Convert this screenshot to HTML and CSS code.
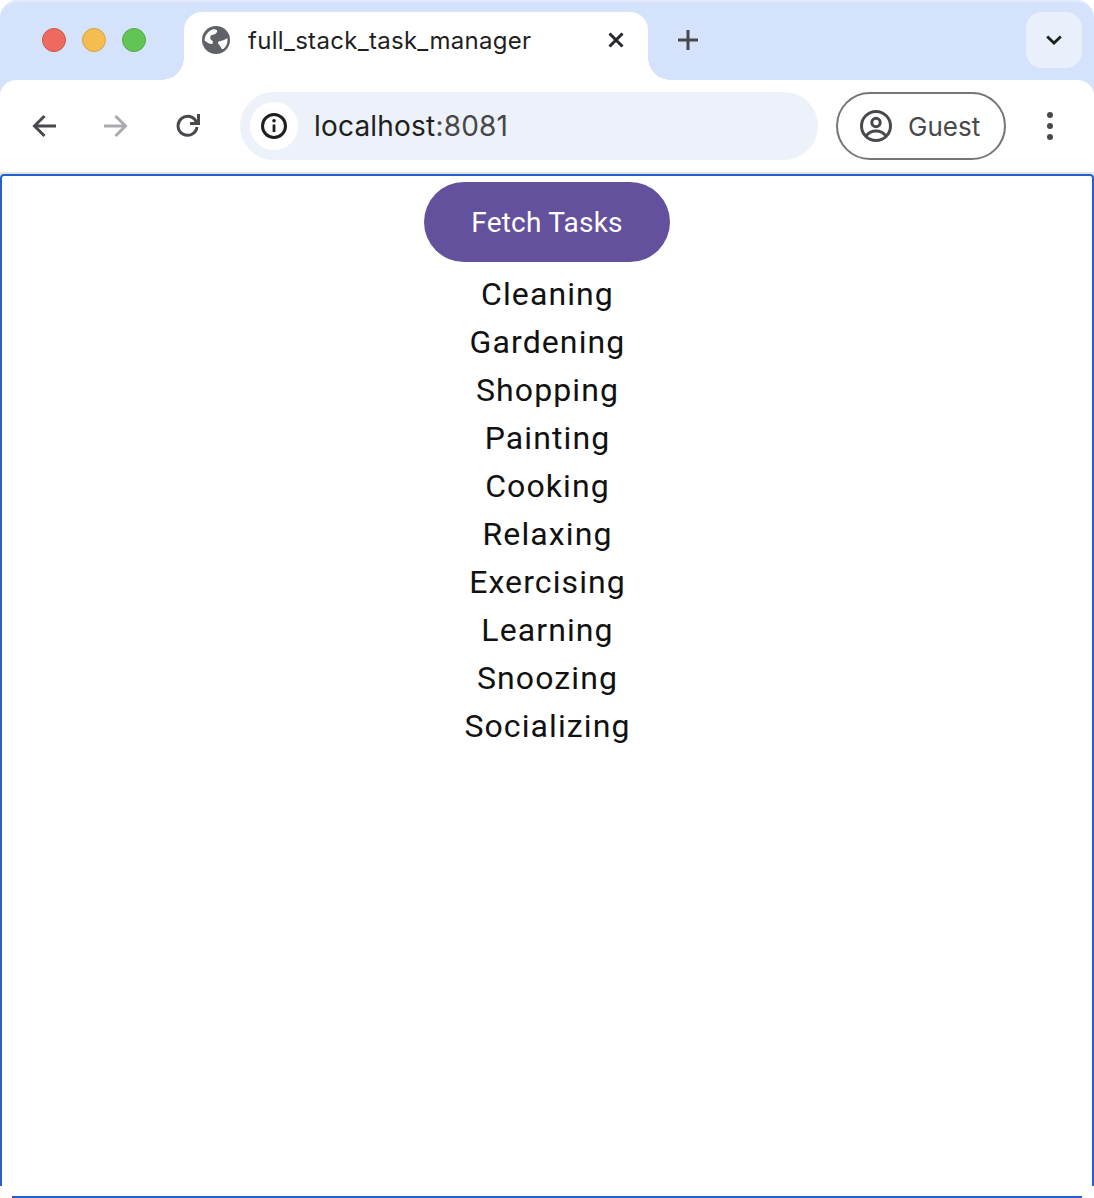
FILE: index.html
```html
<!DOCTYPE html>
<html lang="en">

<head>
  <meta charset="UTF-8" />
  <meta name="viewport" content="width=device-width, initial-scale=1.0" />
  <title>full_stack_task_manager</title>
  <link rel="stylesheet" href="styles.css">
</head>

<body>

  <div class="chrome">
    <header class="tabstrip">
      <div class="lights">
        <span class="light red"></span>
        <span class="light yellow"></span>
        <span class="light green"></span>
      </div>

      <div class="tab">
        <svg class="globe" viewBox="0 0 24 24">
          <circle cx="12" cy="12" r="12" fill="#5f6368"/>
          <path fill="#fff" d="M2.200 12.500C2.400 8 5 4.500 9 3c1.500-.4 3 0 4 .8 0 1.700-1 3-3 3.400-2 .3-3 1.300-3 2.800 0 1.500 1.300 2 2.300 3L9 15.500c-3 0-5-1.500-6.800-3z"/>
          <path fill="#fff" d="M21.800 10.500c.4 3.500-.8 7-3.300 9-1 .8-2 0-2.500-1.500-.5-1.500-1.500-2-2.200-3-.3-1.500.7-2 2.200-2.200 2-.3 4-1.300 5.800-2.300z"/>
        </svg>
        <span class="tab-title">full_stack_task_manager</span>
        <svg class="tab-close" viewBox="0 0 16 16"><path d="M1.500 1.500l13 13M14.500 1.500l-13 13" stroke="#26282b" stroke-width="3" fill="none"/></svg>
      </div>

      <svg class="new-tab" viewBox="0 0 20 20"><path d="M10 0v20M0 10h20" stroke="#47494c" stroke-width="3" fill="none"/></svg>

      <div class="tab-search">
        <svg viewBox="0 0 16 10" width="16" height="10"><path d="M1.200 1.500L8 8l6.800-6.500" stroke="#1f1f1f" stroke-width="2.800" fill="none"/></svg>
      </div>
    </header>

    <nav class="toolbar">
      <svg class="nav-icon" viewBox="0 0 24 24"><path d="M24 12H2.500M12.500 2L2.500 12l10 10" stroke="#47494c" stroke-width="3" fill="none"/></svg>
      <svg class="nav-icon" viewBox="0 0 24 24"><path d="M0 12h21.500M11.500 2l10 10-10 10" stroke="#a9abae" stroke-width="3" fill="none"/></svg>
      <svg class="nav-icon" viewBox="0 0 24 24"><path d="M20.500 8.500A9.500 9.500 0 1 0 21 13" stroke="#47494c" stroke-width="3" fill="none"/><path d="M22.500 0v9.500H14" stroke="#47494c" stroke-width="3" fill="none"/></svg>

      <div class="omnibox">
        <span class="site-info">
          <svg viewBox="0 0 26 26" width="26" height="26"><circle cx="13" cy="13" r="11.500" stroke="#1f1f1f" stroke-width="3" fill="none"/><path d="M13 11.500v7.500" stroke="#1f1f1f" stroke-width="2.800"/><circle cx="13" cy="7.800" r="1.800" fill="#1f1f1f"/></svg>
        </span>
        <span class="url">localhost<span class="port">:8081</span></span>
      </div>

      <div class="profile">
        <svg viewBox="0 0 32 32" width="32" height="32"><circle cx="16" cy="16" r="14.500" stroke="#47494c" stroke-width="3" fill="none"/><circle cx="16" cy="12.500" r="4.200" stroke="#47494c" stroke-width="3" fill="none"/><path d="M6 26c2.500-3.500 6-5 10-5s7.500 1.500 10 5" stroke="#47494c" stroke-width="3" fill="none"/></svg>
        <span>Guest</span>
      </div>

      <div class="menu-dots">
        <span></span>
        <span></span>
        <span></span>
      </div>
    </nav>
  </div>

  <main class="page">
    <button class="fetch-btn">Fetch Tasks</button>
    <ul class="task-list" id="task-list"></ul>
  </main>

  <script>
    const tasks = ['Cleaning', 'Gardening', 'Shopping', 'Painting', 'Cooking', 'Relaxing', 'Exercising', 'Learning', 'Snoozing', 'Socializing'];

    const list = document.getElementById('task-list');
    tasks.forEach(task => {
      const item = document.createElement('li');
      item.textContent = task;
      list.appendChild(item);
    });
  </script>
</body>

</html>
```

FILE: styles.css
```css
* {
  box-sizing: border-box;
  margin: 0;
  padding: 0;
}

html,
body {
  height: 100%;
  overflow: hidden;
}

body {
  display: flex;
  flex-direction: column;
  font-family: Roboto, sans-serif;
  background: #fff;
  color: #1f1f1f;
}

.chrome {
  flex-shrink: 0;
  background: #d5e2fb;
  border-radius: 18px 18px 0 0;
}

/* tab strip */
.tabstrip {
  display: flex;
  align-items: flex-start;
  height: 80px;
  padding-top: 10px;
  border-top: 2px solid #e3ebfb;
  border-radius: 18px 18px 0 0;
}

.lights {
  display: flex;
  gap: 16px;
  width: 184px;
  padding: 16px 0 0 42px;
}

.light {
  width: 24px;
  height: 24px;
  border-radius: 50%;
  border: 1px solid;
}

.red {
  background: #ee6a5f;
  border-color: #ce5347;
}

.yellow {
  background: #f5bd4f;
  border-color: #d6a243;
}

.green {
  background: #61c454;
  border-color: #58a942;
}

.tab {
  position: relative;
  display: flex;
  align-items: center;
  width: 464px;
  height: 68px;
  padding: 0 24px 12px 18px;
  background: #fff;
  border-radius: 18px 18px 0 0;
}

.tab::before,
.tab::after {
  content: "";
  position: absolute;
  bottom: 0;
  width: 22px;
  height: 22px;
}

.tab::before {
  left: -22px;
  background: radial-gradient(circle at 0 0, #d5e2fb 21.500px, #fff 22px);
}

.tab::after {
  right: -22px;
  background: radial-gradient(circle at 100% 0, #d5e2fb 21.500px, #fff 22px);
}

.globe {
  width: 28px;
  height: 28px;
  flex-shrink: 0;
}

.tab-title {
  flex: 1;
  margin-left: 18px;
  font-family: Inter, sans-serif;
  font-size: 24px;
  letter-spacing: 0.3px;
  color: #1f1f1f;
}

.tab-close {
  width: 16px;
  height: 16px;
}

.new-tab {
  width: 20px;
  height: 20px;
  margin: 18px 0 0 30px;
}

.tab-search {
  display: flex;
  align-items: center;
  justify-content: center;
  width: 56px;
  height: 56px;
  margin: 0 12px 0 auto;
  background: #e9f0fc;
  border-radius: 16px;
}

/* toolbar */
.toolbar {
  display: flex;
  align-items: center;
  height: 94px;
  padding-left: 32px;
  background: #fff;
  border-radius: 16px 16px 0 0;
  border-bottom: 2px solid #e1e3e6;
}

.nav-icon {
  width: 24px;
  height: 24px;
  margin-right: 48px;
}

.omnibox {
  display: flex;
  align-items: center;
  width: 578px;
  height: 68px;
  margin-left: -8px;
  padding-left: 10px;
  background: #ecf1fa;
  border-radius: 34px;
}

.site-info {
  display: flex;
  align-items: center;
  justify-content: center;
  width: 48px;
  height: 48px;
  background: #fff;
  border-radius: 50%;
}

.url {
  margin-left: 16px;
  font-family: Inter, sans-serif;
  font-size: 28px;
  letter-spacing: 0.2px;
  color: #1f1f1f;
}

.port {
  color: #474747;
}

.profile {
  display: flex;
  align-items: center;
  gap: 16px;
  width: 170px;
  height: 68px;
  margin-left: 18px;
  padding-left: 22px;
  border: 2px solid #747678;
  border-radius: 34px;
  font-family: Inter, sans-serif;
  font-size: 26px;
  color: #47494c;
}

.menu-dots {
  display: flex;
  flex-direction: column;
  gap: 5px;
  margin-left: 41px;
}

.menu-dots span {
  width: 6px;
  height: 6px;
  border-radius: 50%;
  background: #47494c;
}

/* page */
.page {
  position: relative;
  flex: 1;
  display: flex;
  flex-direction: column;
  align-items: center;
  padding-top: 6px;
  border: 2px solid #2560c8;
  border-radius: 4px 4px 0 0;
}

.page::before,
.page::after {
  content: "";
  position: absolute;
  bottom: -2px;
  width: 12px;
  height: 12px;
  background: #fff;
}

.page::before {
  left: -2px;
}

.page::after {
  right: -2px;
}

.fetch-btn {
  width: 246px;
  height: 80px;
  margin-bottom: 8px;
  background: #63519d;
  color: #fff;
  border: none;
  border-radius: 40px;
  font-family: Roboto, sans-serif;
  font-size: 28px;
  font-weight: 400;
  letter-spacing: 0.2px;
}

.task-list {
  list-style: none;
  text-align: center;
  padding-left: 1px;
}

.task-list li {
  font-size: 32px;
  line-height: 48px;
  letter-spacing: 1.1px;
  color: #111;
}
```
